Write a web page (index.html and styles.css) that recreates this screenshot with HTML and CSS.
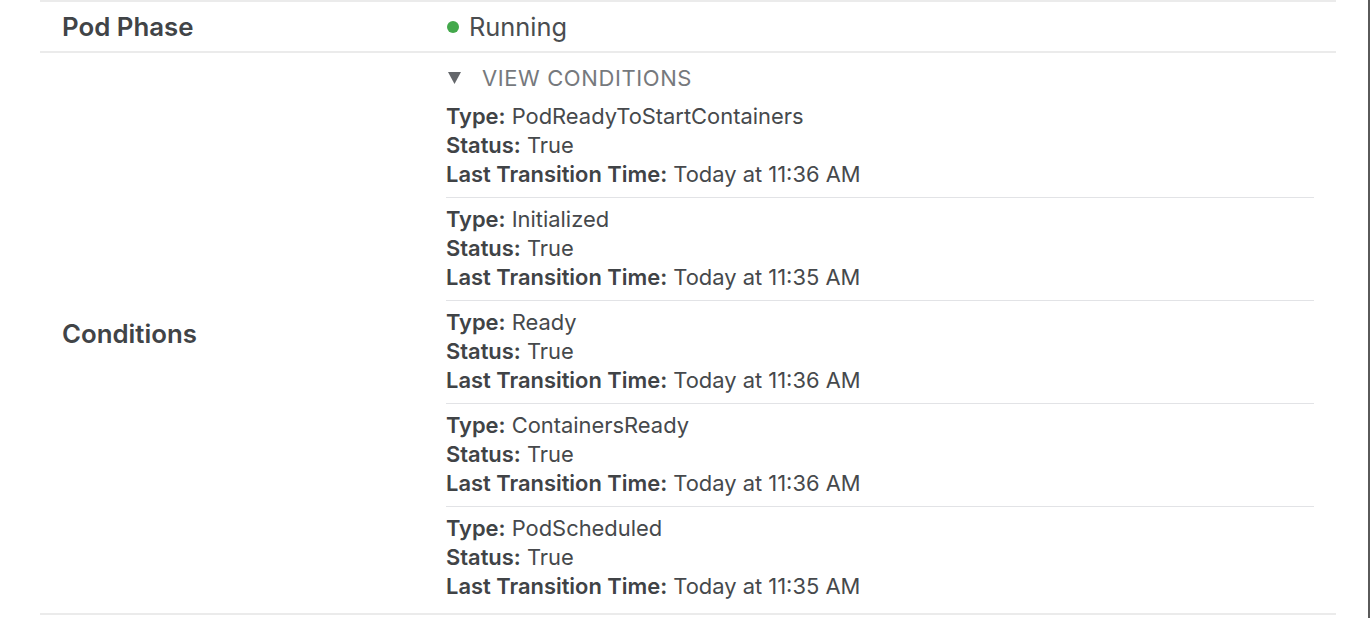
FILE: index.html
```html
<!DOCTYPE html>
<html lang="en">
<head>
<meta charset="utf-8">
<title>Pod details</title>
<link rel="stylesheet" href="styles.css">
</head>
<body>
<div class="details">
  <div class="row">
    <div class="label">Pod Phase</div>
    <div class="value">
      <span class="status"><span class="dot"></span>Running</span>
    </div>
  </div>
  <div class="row row-conditions">
    <div class="label label-conditions">Conditions</div>
    <div class="value">
      <div class="toggle">
        <svg class="caret" width="13" height="12" viewBox="0 0 13 12" aria-hidden="true"><polygon points="0,0 13,0 6.5,12"/></svg>
        <span>VIEW CONDITIONS</span>
      </div>
      <ul class="conditions">
        <li class="cond">
          <div><b>Type:</b> PodReadyToStartContainers</div>
          <div><b>Status:</b> True</div>
          <div><b>Last Transition Time:</b> Today at 11:36 AM</div>
        </li>
        <li class="cond">
          <div><b>Type:</b> Initialized</div>
          <div><b>Status:</b> True</div>
          <div><b>Last Transition Time:</b> Today at 11:35 AM</div>
        </li>
        <li class="cond">
          <div><b>Type:</b> Ready</div>
          <div><b>Status:</b> True</div>
          <div><b>Last Transition Time:</b> Today at 11:36 AM</div>
        </li>
        <li class="cond">
          <div><b>Type:</b> ContainersReady</div>
          <div><b>Status:</b> True</div>
          <div><b>Last Transition Time:</b> Today at 11:36 AM</div>
        </li>
        <li class="cond">
          <div><b>Type:</b> PodScheduled</div>
          <div><b>Status:</b> True</div>
          <div><b>Last Transition Time:</b> Today at 11:35 AM</div>
        </li>
      </ul>
    </div>
  </div>
</div>
</body>
</html>
```
FILE: styles.css
```css
html, body {
  height: 100%;
}
body {
  margin: 0;
  box-sizing: border-box;
  border-right: 2px solid #5a5a5a;
  background: #fff;
  color: #45484b;
  font-family: Inter, "Liberation Sans", sans-serif;
}
.details {
  margin-left: 40px;
  width: 1296px;
  border-top: 2px solid #ebebeb;
}
.row {
  display: flex;
  align-items: center;
  border-bottom: 2px solid #ebebeb;
  padding: 10px 22px;
}
.row-conditions {
  padding-bottom: 4px;
}
.label {
  width: 384px;
  flex: none;
  font-size: 25.8px;
  font-weight: 600;
  line-height: 29px;
  color: #414447;
}
.label-conditions {
  margin-bottom: 5px;
}
.value {
  flex: 1;
  min-width: 0;
}
.status {
  display: inline-flex;
  align-items: center;
  font-size: 25.4px;
  line-height: 29px;
  color: #4a4d50;
}
.dot {
  width: 12px;
  height: 12px;
  border-radius: 50%;
  background: #43a84b;
  margin: 0 10px 0 1px;
}
.toggle {
  display: flex;
  align-items: center;
  height: 29px;
  margin-bottom: 3px;
  color: #76797d;
  font-size: 22px;
  letter-spacing: 0.6px;
}
.caret {
  fill: #64676b;
  margin: 0 21px 0 2px;
}
.conditions {
  list-style: none;
  margin: 0;
  padding: 0;
}
.cond {
  padding: 7px 0 8px;
  border-bottom: 1px solid #e2e3e6;
  font-size: 21.9px;
  line-height: 29px;
  color: #46494c;
}
.cond:last-child {
  border-bottom: none;
}
.cond b {
  font-weight: 600;
  color: #404346;
}
```
